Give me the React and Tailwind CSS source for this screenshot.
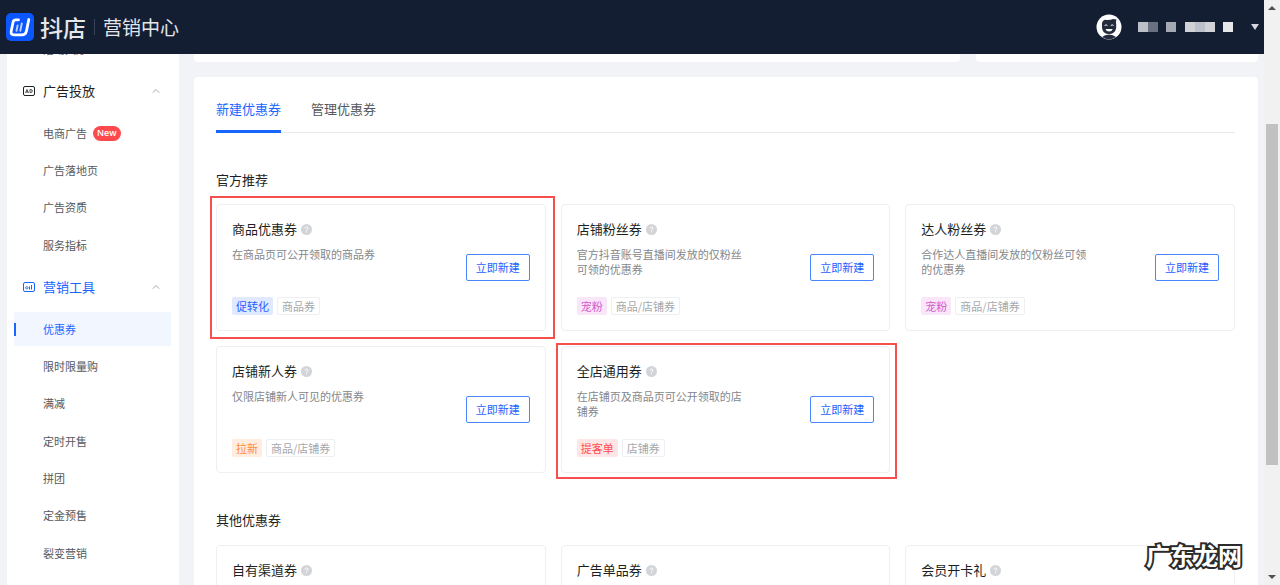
import React from 'react';
import { FiChevronUp } from 'react-icons/fi';

const adMenu = [
  { label: '电商广告', isNew: true },
  { label: '广告落地页' },
  { label: '广告资质' },
  { label: '服务指标' },
];

const toolMenu = [
  { label: '优惠券', active: true },
  { label: '限时限量购' },
  { label: '满减' },
  { label: '定时开售' },
  { label: '拼团' },
  { label: '定金预售' },
  { label: '裂变营销' },
];

const officialCoupons = [
  {
    title: '商品优惠券',
    desc: '在商品页可公开领取的商品券',
    tag: '促转化',
    tagClass: 'bg-[#e0e9ff] text-[#2a5cff]',
    scope: '商品券',
    markClass: '-top-[9px] -bottom-[9px] -left-[7px] -right-[10px]',
  },
  {
    title: '店铺粉丝券',
    desc: '官方抖音账号直播间发放的仅粉丝可领的优惠券',
    tag: '宠粉',
    tagClass: 'bg-[#f9e6f8] text-[#d35bcd]',
    scope: '商品/店铺券',
  },
  {
    title: '达人粉丝券',
    desc: '合作达人直播间发放的仅粉丝可领的优惠券',
    tag: '宠粉',
    tagClass: 'bg-[#f9e6f8] text-[#d35bcd]',
    scope: '商品/店铺券',
  },
  {
    title: '店铺新人券',
    desc: '仅限店铺新人可见的优惠券',
    tag: '拉新',
    tagClass: 'bg-[#ffeee0] text-[#ff8a3c]',
    scope: '商品/店铺券',
  },
  {
    title: '全店通用券',
    desc: '在店铺页及商品页可公开领取的店铺券',
    tag: '提客单',
    tagClass: 'bg-[#ffe6e6] text-[#ff4a50]',
    scope: '店铺券',
    markClass: '-top-[4px] -bottom-[7px] -left-[6px] -right-[8px]',
  },
];

const otherCoupons = [{ title: '自有渠道券' }, { title: '广告单品券' }, { title: '会员开卡礼' }];

const LogoIcon = () => (
  <svg className="h-7 w-7 shrink-0" viewBox="0 0 28 28" aria-hidden="true">
    <rect width="28" height="28" rx="5" fill="#0a57ff" />
    <path
      d="M12.5 6.8H10Q7.600 6.800 7.100 9L5.200 18.200Q4.500 21.800 7.800 21.800H16Q19.600 21.800 20.400 18.200L22.800 6.500"
      fill="none"
      stroke="#fff"
      strokeWidth="2.8"
      strokeLinecap="round"
      strokeLinejoin="round"
    />
    <path d="M11.6 12.500L10.500 17.800M15.800 10.500L14.300 17.800" fill="none" stroke="#b9d0ff" strokeWidth="1.900" strokeLinecap="round" />
  </svg>
);

const Avatar = () => (
  <svg className="h-[26px] w-[26px]" viewBox="0 0 26 26" aria-hidden="true">
    <circle cx="13" cy="13" r="12.5" fill="#fff" />
    <path d="M6 11Q5.500 7 9 5.800Q14 6.500 17 5L20.500 5.500Q19.500 8 20.200 10.500V14Q19 20 13 20Q7 20 6 14Z" fill="#232b3d" />
    <path d="M6 23Q9 20.500 13 20.500Q17 20.500 20 23Q13 27.500 6 23Z" fill="#232b3d" />
    <path d="M8.600 11.500Q10 10.200 11.400 11.500M14.800 11.500Q16.200 10.200 17.600 11.500" fill="none" stroke="#fff" strokeWidth="1" />
    <path d="M9.500 15H16.700Q16 17.600 13.100 17.600Q10.200 17.600 9.500 15Z" fill="#fff" />
  </svg>
);

const AdIcon = () => (
  <svg className="h-3 w-3 shrink-0" viewBox="0 0 12 12" fill="none" stroke="currentColor" aria-hidden="true">
    <rect x="0.500" y="1.500" width="11" height="9" rx="1.500" />
    <path d="M2.500 8L4 4.500L5.500 8M3.200 7H5M7 4.500V7.500H7.800Q9.300 7.500 9.300 6T7.800 4.500Z" strokeWidth="0.800" />
  </svg>
);

const ToolIcon = () => (
  <svg className="h-3 w-3 shrink-0" viewBox="0 0 12 12" fill="none" stroke="currentColor" aria-hidden="true">
    <rect x="0.500" y="1.500" width="11" height="9" rx="1.500" />
    <circle cx="3.800" cy="6.800" r="1.200" strokeWidth="0.900" />
    <path d="M6.500 5.500V8.500M8.500 4V8.500" />
  </svg>
);

const HelpIcon = () => (
  <svg className="h-[11px] w-[11px] shrink-0" viewBox="0 0 11 11" aria-hidden="true">
    <circle cx="5.500" cy="5.500" r="5.500" fill="#d2d4d8" />
    <path d="M4 4.400Q4 3 5.500 3T7 4.400Q7 5.200 5.500 5.700V6.500M5.500 7.300V8.300" fill="none" stroke="#fff" strokeWidth="0.900" />
  </svg>
);

const MenuGroup = ({ icon: Icon, title, items, colorClass, listClass }) => (
  <section>
    <button className={`flex h-[50px] w-full items-center pr-[17px] pb-px pl-4 text-[13px] ${colorClass}`}>
      <Icon />
      <span className="ml-2">{title}</span>
      <FiChevronUp className="ml-auto text-[#a5a8ad]" size={12} />
    </button>
    <ul className={`grid content-between ${listClass}`}>
      {items.map((item) => (
        <li key={item.label}>
          <a
            href="#"
            className={`mr-2 ml-[7px] flex h-[34px] items-center text-[11px] ${
              item.active ? 'bg-[#f1f6ff] text-[#1966ff]' : 'text-[#55585c]'
            }`}
          >
            <span className={`h-[13px] w-0.5 ${item.active ? 'bg-[#1966ff]' : ''}`}></span>
            <span className="ml-[27px]">{item.label}</span>
            {item.isNew && (
              <span className="ml-1.5 flex h-[15px] items-center rounded-full bg-[#ff4a4d] px-1 font-['Open_Sans',sans-serif] text-[9px] font-semibold text-white">
                New
              </span>
            )}
          </a>
        </li>
      ))}
    </ul>
  </section>
);

const CouponCard = ({ coupon }) => (
  <article className="relative flex h-[127px] items-center justify-between rounded border border-[#eeeff1] px-[15px]">
    <div className="flex h-full flex-col pt-4">
      <h3 className="flex items-center gap-1 text-[13px] leading-4 text-[#1d1f23]">
        {coupon.title}
        <HelpIcon />
      </h3>
      {coupon.desc && <p className="mt-2.5 w-[170px] text-[11px] leading-[15px] text-[#85878b]">{coupon.desc}</p>}
      {coupon.tag && (
        <div className="mt-auto mb-[15px] flex gap-1 text-[11px] leading-4">
          <span className={`rounded-xs border border-transparent px-[3px] ${coupon.tagClass}`}>{coupon.tag}</span>
          <span className="rounded-xs border border-[#eeeff1] px-1 text-[#a5a7ab]">{coupon.scope}</span>
        </div>
      )}
    </div>
    {coupon.desc && (
      <button className="h-[27px] w-16 shrink-0 rounded-xs border border-[#4a85ff] text-[11px] text-[#1f5eff]">立即新建</button>
    )}
    {coupon.markClass && <div className={`pointer-events-none absolute z-10 border-2 border-[#f5504e] ${coupon.markClass}`}></div>}
  </article>
);

const Header = () => (
  <header className="z-10 flex h-[54px] shrink-0 items-center bg-[#131e33] pr-[5px] pl-1.5 text-[#e4e6ea]">
    <LogoIcon />
    <span className="ml-1.5 text-[23px] leading-7 font-medium">抖店</span>
    <span className="ml-2 h-4 w-px bg-[#39435a]"></span>
    <h1 className="ml-2 text-[19px] leading-6">营销中心</h1>

    <div className="ml-auto flex items-center">
      <Avatar />
      {/* Nama akun disamarkan */}
      <div className="ml-4 flex h-2.5">
        <span className="w-2.5 bg-[#bcbfc6]"></span>
        <span className="w-2.5 bg-[#697080]"></span>
        <span className="ml-2 w-2.5 bg-[#a5a9b4]"></span>
        <span className="ml-[9px] w-2.5 bg-[#d0d2d6]"></span>
        <span className="w-2.5 bg-[#bcc0c8]"></span>
        <span className="w-2.5 bg-[#d0d2d6]"></span>
        <span className="ml-2 w-2.5 bg-[#e6e7ea]"></span>
      </div>
      <svg className="ml-[18px] h-1.5 w-2" viewBox="0 0 8 6" fill="#d3d6db" aria-hidden="true">
        <path d="M0 0H8L4 6Z" />
      </svg>
    </div>
  </header>
);

const ScrollRail = () => (
  <div className="flex w-4 shrink-0 flex-col items-center bg-[#f1f1f1]" aria-hidden="true">
    <svg className="mt-1.5 h-1 w-2" viewBox="0 0 8 4" fill="#505050">
      <path d="M0 4L4 0L8 4Z" />
    </svg>
    <div className="grow-[114]"></div>
    <div className="w-3 grow-[341] bg-[#c1c1c1]"></div>
    <div className="grow-[110]"></div>
    <svg className="mb-1.5 h-1 w-2" viewBox="0 0 8 4" fill="#505050">
      <path d="M0 0L4 4L8 0Z" />
    </svg>
  </div>
);

export default function App() {
  return (
    <div className="relative flex h-screen overflow-hidden bg-[#f1f3f6] font-['Noto_Sans_CJK_SC',sans-serif]">
      <div className="flex min-w-0 flex-1 flex-col">
        <Header />

        <div className="flex min-h-0 flex-1 gap-[15px] overflow-hidden pr-1.5 pl-[7px]">
          {/* Sidebar */}
          <nav className="w-[172px] shrink-0 bg-white">
            <a href="#" className="-mt-[22px] flex h-[34px] items-center pl-9 text-[11px] text-[#55585c]">
              活动大厅
            </a>
            <MenuGroup icon={AdIcon} title="广告投放" items={adMenu} colorClass="text-[#1d1f23]" listClass="h-[146px]" />
            <MenuGroup icon={ToolIcon} title="营销工具" items={toolMenu} colorClass="text-[#1966ff]" listClass="h-[258px]" />
          </nav>

          {/* Konten utama */}
          <main className="min-w-0 flex-1">
            <div className="flex h-2 gap-4">
              <div className="flex-1 rounded-b bg-white"></div>
              <div className="w-[282px] rounded-b bg-white"></div>
            </div>

            <div className="mt-[15px] rounded bg-white pr-[23px] pl-[22px]">
              <div className="flex h-14 gap-[30px] border-b border-[#e9eaec] text-[13px]" role="tablist">
                <button role="tab" aria-selected="true" className="-mb-px border-b-3 border-[#1966ff] pt-3 pb-0.5 text-[#1966ff]">
                  新建优惠券
                </button>
                <button role="tab" aria-selected="false" className="pt-3 pb-1 text-[#55585c]">
                  管理优惠券
                </button>
              </div>

              <h2 className="mt-[37px] text-[13px] leading-5 text-[#1d1f23]">官方推荐</h2>
              <div className="mt-[14px] grid grid-cols-3 gap-[15px]">
                {officialCoupons.map((coupon) => (
                  <CouponCard key={coupon.title} coupon={coupon} />
                ))}
              </div>

              <h2 className="mt-[37px] text-[13px] leading-5 text-[#1d1f23]">其他优惠券</h2>
              <div className="mt-[15px] grid grid-cols-3 gap-[15px]">
                {otherCoupons.map((coupon) => (
                  <CouponCard key={coupon.title} coupon={coupon} />
                ))}
              </div>
            </div>
          </main>
        </div>
      </div>

      <ScrollRail />

      <span className="absolute right-[38px] bottom-[14px] z-20 text-[24px] leading-8 font-bold text-white [-webkit-text-stroke:4px_#2b2b2b] [paint-order:stroke_fill]">
        广东龙网
      </span>
    </div>
  );
}
